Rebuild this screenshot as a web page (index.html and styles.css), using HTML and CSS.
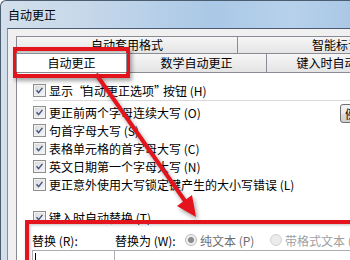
FILE: index.html
```html
<!DOCTYPE html>
<html lang="zh-CN">
<head>
<meta charset="utf-8">
<title>自动更正</title>
<link rel="stylesheet" href="styles.css">
</head>
<body>
<div class="screen">
  <div class="window">
    <div class="titlebar">自动更正</div>
    <div class="client">
      <div class="tabs">
        <div class="tabrow">
          <div class="tab t-autoformat">自动套用格式</div>
          <div class="tab t-smart">智能标记</div>
        </div>
        <div class="tabrow">
          <div class="tab active t-ac">自动更正</div>
          <div class="tab t-math">数学自动更正</div>
          <div class="tab t-type">键入时自动更正</div>
        </div>
      </div>
      <div class="panel">
        <div class="opt"><span class="cb"><svg viewBox="0 0 13 13"><path d="M3 6.3 L5.4 9 L10 3.4"/></svg></span>显示<span class="q">“</span>自动更正选项<span class="q">”</span>按钮 (H)</div>
        <div class="sep"></div>
        <div class="opts">
          <div class="optlist">
            <div class="opt"><span class="cb"><svg viewBox="0 0 13 13"><path d="M3 6.3 L5.4 9 L10 3.4"/></svg></span>更正前两个字母连续大写 (O)</div>
            <div class="opt"><span class="cb"><svg viewBox="0 0 13 13"><path d="M3 6.3 L5.4 9 L10 3.4"/></svg></span>句首字母大写 (S)</div>
            <div class="opt"><span class="cb"><svg viewBox="0 0 13 13"><path d="M3 6.3 L5.4 9 L10 3.4"/></svg></span>表格单元格的首字母大写 (C)</div>
            <div class="opt"><span class="cb"><svg viewBox="0 0 13 13"><path d="M3 6.3 L5.4 9 L10 3.4"/></svg></span>英文日期第一个字母大写 (N)</div>
            <div class="opt"><span class="cb"><svg viewBox="0 0 13 13"><path d="M3 6.3 L5.4 9 L10 3.4"/></svg></span>更正意外使用大写锁定键产生的大小写错误 (L)</div>
          </div>
          <div class="btncol"><div class="btn">例外项(E)...</div></div>
        </div>
        <div class="opt opt-replace"><span class="cb"><svg viewBox="0 0 13 13"><path d="M3 6.3 L5.4 9 L10 3.4"/></svg></span>键入时自动替换 (T)</div>
        <div class="replace">
          <div class="rlabels">
            <span>替换 (R):</span>
            <span>替换为 (W):</span>
            <span class="radio on"><span class="rb"></span>纯文本 (P)</span>
            <span class="radio off"><span class="rb"></span>带格式文本 (F)</span>
          </div>
          <div class="rinputs">
            <div class="inp inp-from"><span class="caret"></span></div>
            <div class="inp inp-to"></div>
          </div>
        </div>
      </div>
    </div>
  </div>
  <div class="mark mark-tab"></div>
  <div class="mark mark-group"></div>
  <svg class="arrow" viewBox="0 0 350 260">
    <g class="arrow-g">
      <line x1="96" y1="74" x2="185" y2="201"/>
      <polygon points="196,217 177,206 192,195"/>
    </g>
  </svg>
</div>
</body>
</html>
```

FILE: styles.css
```css
* { box-sizing: border-box; }
html, body { margin: 0; padding: 0; }
body {
  width: 350px;
  height: 260px;
  overflow: hidden;
  font-family: "Noto Sans CJK SC", "Liberation Sans", sans-serif;
  font-size: 12px;
  color: #000;
  background: #fff;
}
.screen {
  position: relative;
  width: 350px;
  height: 260px;
  overflow: hidden;
}
.window {
  width: 470px;
  height: 260px;
  border-top: 1px solid #4d5d70;
  border-left: 1px solid #4d5d70;
  border-top-left-radius: 6px;
  background: linear-gradient(to right, #d3dfeb 0%, #c6d8ea 18%, #aac8e7 45%, #b7d1eb 62%, #a4c3e4 80%, #b9d2ec 100%);
}
.titlebar {
  height: 27px;
  padding-left: 7px;
  line-height: 28px;
  white-space: nowrap;
}
.client {
  margin-left: 6px;
  height: 233px;
  border-top: 1px solid #4a5a70;
  border-left: 1px solid #7f90a6;
  background: #f0f0f0;
  padding: 7px 0 0 8px;
}
.tabrow {
  display: flex;
  white-space: nowrap;
}
.tab {
  flex: none;
  text-align: center;
  border: 1px solid #898c95;
  border-bottom: none;
  margin-left: -1px;
  background: linear-gradient(#f6f6f6, #e4e4e4);
}
.tab:first-child { margin-left: 0; }
.tabrow:first-child .tab { height: 17px; line-height: 16px; }
.tabrow:last-child .tab { height: 19px; line-height: 18px; }
.t-autoformat { width: 222px; }
.t-smart { width: 198px; }
.t-ac { width: 111px; }
.t-math { width: 141px; }
.t-type { width: 145px; }
.tab.active {
  background: #fff;
  position: relative;
  z-index: 1;
  height: 20px;
  margin-bottom: -1px;
}
.panel {
  background: #fff;
  border: 1px solid #898c95;
  height: 200px;
  padding-top: 8px;
}
.opt {
  display: flex;
  align-items: center;
  height: 18px;
  padding-left: 16px;
  white-space: nowrap;
}
.q { letter-spacing: -3px; }
.cb {
  flex: none;
  width: 13px;
  height: 13px;
  margin-right: 3px;
  border: 1px solid #8e8f8f;
  background: linear-gradient(135deg, #d8d8d8, #f7f7f7);
  box-shadow: inset 0 0 0 1px #f2f2f2;
}
.cb svg {
  display: block;
  width: 11px;
  height: 11px;
}
.cb path {
  fill: none;
  stroke: #3f5383;
  stroke-width: 1.7;
}
.sep {
  height: 1px;
  margin: 1px 0 2px 16px;
  background: #d9d9d9;
}
.opts {
  display: grid;
  grid-template-columns: 323px auto;
}
.btncol { padding-top: 1px; }
.btn {
  width: 80px;
  height: 19px;
  border: 1px solid #707070;
  border-radius: 3px;
  background: linear-gradient(#f2f2f2 0%, #ebebeb 50%, #dddddd 51%, #cfcfcf 100%);
  padding-left: 4px;
  line-height: 17px;
  white-space: nowrap;
}
.opt-replace { margin-top: 15px; }
.replace {
  margin-top: 5px;
  padding-left: 15px;
}
.rlabels {
  display: grid;
  grid-template-columns: 83px 70px 85px auto;
  height: 18px;
  align-items: center;
  white-space: nowrap;
}
.radio {
  display: flex;
  align-items: center;
}
.radio.on { color: #6d6d6d; }
.radio.off { color: #a0a0a0; }
.rb {
  width: 12px;
  height: 12px;
  margin-right: 3px;
  border-radius: 50%;
  border: 1px solid #b9b9b9;
  background: #f2f2f2;
}
.radio.on .rb {
  background: radial-gradient(circle, #8a8a8a 0 2.5px, #e6e6e6 3.5px, #f4f4f4 60%);
}
.radio.off .rb { border-color: #d2d2d2; background: #ececec; }
.rinputs {
  display: grid;
  grid-template-columns: 83px 1fr;
  margin-top: 1px;
}
.inp {
  height: 30px;
  border: 1px solid #abadb3;
  border-bottom: none;
  background: #fff;
}
.inp-to { margin-left: -1px; }
.caret {
  display: block;
  width: 1px;
  height: 9px;
  margin: 2px 0 0 2px;
  background: #000;
}
.mark {
  position: absolute;
  border: 4px solid #e3141b;
  box-shadow: 2px 3px 4px rgba(0, 0, 0, 0.35), inset 1px 1px 3px rgba(0, 0, 0, 0.25);
}
.mark-tab {
  left: 13px;
  top: 47px;
  width: 117px;
  height: 31px;
}
.mark-group {
  left: 25px;
  top: 220px;
  width: 340px;
  height: 60px;
}
.arrow {
  position: absolute;
  left: 0;
  top: 0;
  width: 350px;
  height: 260px;
}
.arrow-g {
  filter: drop-shadow(2px 3px 2px rgba(0, 0, 0, 0.35));
}
.arrow line {
  stroke: #e3141b;
  stroke-width: 4;
}
.arrow polygon { fill: #e3141b; }
```
